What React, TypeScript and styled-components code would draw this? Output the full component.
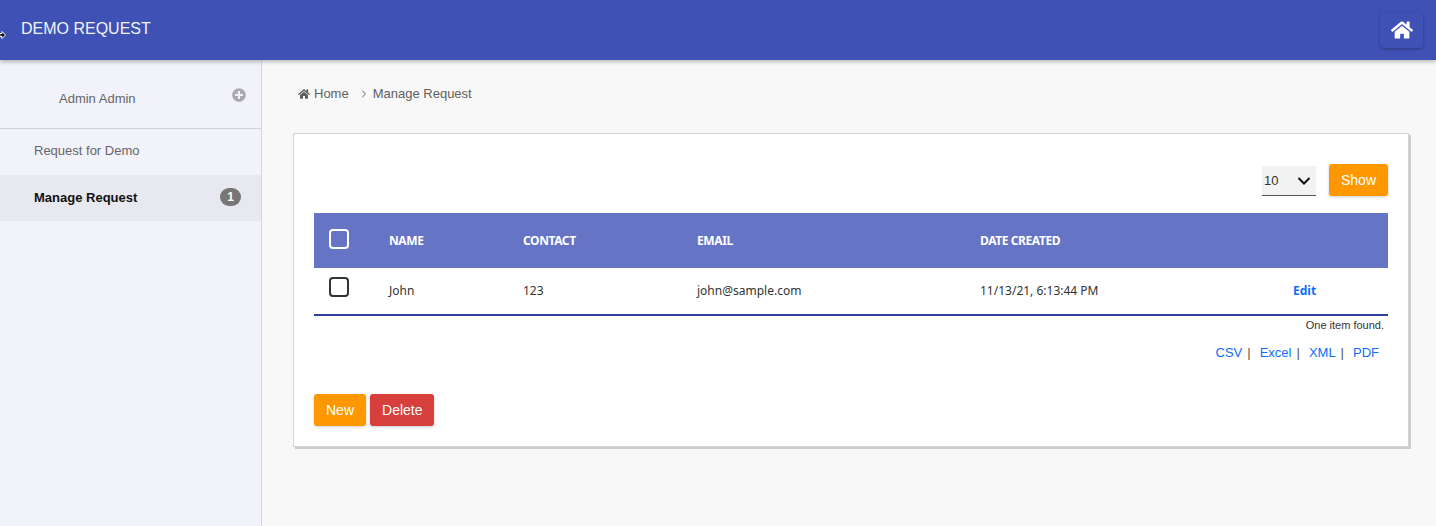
import React from 'react';
import styled, { createGlobalStyle } from 'styled-components';
import { FaHome, FaPlusCircle } from 'react-icons/fa';
import { FiChevronRight } from 'react-icons/fi';

const GlobalStyle = createGlobalStyle`
  html, body {
    margin: 0;
    padding: 0;
    height: 100%;
  }
  body {
    font-family: "Liberation Sans", Arial, sans-serif;
    background: #f8f8f8;
    overflow: hidden;
  }
`;

const columns = [
  { label: 'NAME', width: 134 },
  { label: 'CONTACT', width: 174 },
  { label: 'EMAIL', width: 283 },
  { label: 'DATE CREATED', width: 313 },
];

const App = () => {
  return (
    <Page>
      <GlobalStyle />
      <Header>
        <Brand>DEMO REQUEST</Brand>
        <HomeButton aria-label="Home">
          <FaHome size={22} />
        </HomeButton>
        <Cursor width="8" height="10" viewBox="0 0 8 10">
          <path d="M3 1.5 L6.5 5 L3 8.5 V6.5 H0.8 V3.5 H3 Z" fill="#111" stroke="#fff" strokeWidth="1" />
        </Cursor>
      </Header>
      <Body>
        <Sidebar>
          <UserRow>
            <UserName>Admin Admin</UserName>
            <UserToggle>
              <FaPlusCircle size={14} />
            </UserToggle>
          </UserRow>
          <NavItem>Request for Demo</NavItem>
          <NavItem $active>
            Manage Request
            <Badge>1</Badge>
          </NavItem>
        </Sidebar>
        <Main>
          <Breadcrumb>
            <FaHome size={12} />
            <Crumb>Home</Crumb>
            <CrumbArrow size={12} />
            <Crumb>Manage Request</Crumb>
          </Breadcrumb>
          <Card>
            <PageSizeBar>
              <PageSize>
                <span>10</span>
                <Chevron width="14" height="8" viewBox="0 0 14 8">
                  <path d="M1.5 1 L7 6.5 L12.5 1" fill="none" stroke="#111" strokeWidth="2" />
                </Chevron>
              </PageSize>
              <ActionButton $color="#ff9800">Show</ActionButton>
            </PageSizeBar>
            <Table>
              <colgroup>
                <Col $width={75} />
                {columns.map((c) => (
                  <Col key={c.label} $width={c.width} />
                ))}
                <col />
              </colgroup>
              <thead>
                <tr>
                  <HeadCell>
                    <Check $light />
                  </HeadCell>
                  {columns.map((c) => (
                    <HeadCell key={c.label}>{c.label}</HeadCell>
                  ))}
                  <HeadCell />
                </tr>
              </thead>
              <tbody>
                <tr>
                  <Cell>
                    <Check />
                  </Cell>
                  <Cell>John</Cell>
                  <Cell>123</Cell>
                  <Cell>john@sample.com</Cell>
                  <Cell>11/13/21, 6:13:44 PM</Cell>
                  <Cell>
                    <EditLink href="#edit">Edit</EditLink>
                  </Cell>
                </tr>
              </tbody>
            </Table>
            <ItemCount>One item found.</ItemCount>
            <Exports>
              <ExportLink href="#csv">CSV</ExportLink>
              <Pipe>|</Pipe>
              <ExportLink href="#excel">Excel</ExportLink>
              <Pipe>|</Pipe>
              <ExportLink href="#xml">XML</ExportLink>
              <Pipe>|</Pipe>
              <ExportLink href="#pdf">PDF</ExportLink>
            </Exports>
            <Actions>
              <ActionButton $color="#ff9800">New</ActionButton>
              <ActionButton $color="#d63f3b">Delete</ActionButton>
            </Actions>
          </Card>
        </Main>
      </Body>
    </Page>
  );
};

const Page = styled.div`
  display: flex;
  flex-direction: column;
  height: 526px;
`;

const Header = styled.header`
  position: relative;
  z-index: 2;
  flex: 0 0 60px;
  display: flex;
  align-items: center;
  justify-content: space-between;
  padding: 0 13px 3px 21px;
  box-sizing: border-box;
  background: #3f51b5;
  box-shadow: 0 2px 4px rgba(0, 0, 0, 0.25);
`;

const Brand = styled.div`
  color: #f2f3fb;
  font-size: 16px;
`;

const HomeButton = styled.button`
  width: 43px;
  height: 36px;
  padding: 0;
  margin-top: 3px;
  display: flex;
  align-items: center;
  justify-content: center;
  color: #fff;
  background: #3f51b5;
  border: none;
  border-radius: 4px;
  box-shadow: 0 1px 3px rgba(0, 0, 0, 0.3);
`;

const Cursor = styled.svg`
  position: absolute;
  left: -1px;
  top: 30px;
`;

const Body = styled.div`
  flex: 1;
  display: flex;
  min-height: 0;
`;

const Sidebar = styled.aside`
  flex: 0 0 261px;
  background: #f1f2fa;
  border-right: 1px solid #d6d6d9;
`;

const UserRow = styled.div`
  position: relative;
  height: 69px;
  padding: 30px 0 0 59px;
  box-sizing: border-box;
  border-bottom: 1px solid #d2d2d6;
`;

const UserName = styled.div`
  font-size: 13px;
  line-height: 17px;
  color: #666;
`;

const UserToggle = styled.span`
  position: absolute;
  top: 28px;
  right: 15px;
  color: #a9a9ad;
`;

const NavItem = styled.div<{ $active?: boolean }>`
  display: flex;
  align-items: center;
  justify-content: space-between;
  height: 46px;
  box-sizing: border-box;
  padding: 0 20px ${(p) => (p.$active ? 2 : 4)}px 34px;
  font-size: 13px;
  font-weight: ${(p) => (p.$active ? 700 : 400)};
  color: ${(p) => (p.$active ? '#111' : '#666')};
  background: ${(p) => (p.$active ? '#e7e8f0' : 'transparent')};
`;

const Badge = styled.span`
  width: 21px;
  height: 18px;
  border-radius: 9px;
  display: flex;
  align-items: center;
  justify-content: center;
  font-size: 12px;
  color: #fff;
  background: #777;
`;

const Main = styled.main`
  flex: 1;
  padding: 0 27px 0 31px;
  min-width: 0;
`;

const Breadcrumb = styled.nav`
  display: flex;
  align-items: center;
  height: 17px;
  margin: 25px 0 31px 5px;
  gap: 4px;
  font-size: 13px;
  color: #5f5f5f;
`;

const Crumb = styled.span`
  margin-right: 5px;
`;

const CrumbArrow = styled(FiChevronRight)`
  margin-right: -1px;
`;

const Card = styled.section`
  height: 314px;
  box-sizing: border-box;
  padding: 30px 20px 0 20px;
  background: #fff;
  border: 1px solid #d4d4d4;
  box-shadow: 2px 2px 0 #cccccc;
`;

const PageSizeBar = styled.div`
  display: flex;
  justify-content: flex-end;
  align-items: center;
  gap: 13px;
  height: 32px;
  margin-bottom: 17px;
`;

const PageSize = styled.div`
  display: flex;
  align-items: center;
  justify-content: space-between;
  width: 54px;
  height: 30px;
  margin-top: 2px;
  padding: 0 5px 0 2px;
  box-sizing: border-box;
  font-size: 13px;
  color: #333;
  background: #f2f2f2;
  border-bottom: 1px solid #555;
`;

const Chevron = styled.svg`
  display: block;
`;

const ActionButton = styled.button<{ $color: string }>`
  height: 32px;
  padding: 0 12px;
  font-family: "Liberation Sans", Arial, sans-serif;
  font-size: 14px;
  color: #fff;
  background: ${(p) => p.$color};
  border: none;
  border-radius: 3px;
  box-shadow: 0 1px 3px rgba(0, 0, 0, 0.2);
`;

const Table = styled.table`
  width: 100%;
  table-layout: fixed;
  border-collapse: collapse;
  font-family: "Noto Sans", Lato, sans-serif;
  font-size: 12px;
`;

const Col = styled.col<{ $width: number }>`
  width: ${(p) => p.$width}px;
`;

const HeadCell = styled.th`
  height: 55px;
  padding: 0;
  box-sizing: border-box;
  text-align: left;
  font-weight: 700;
  letter-spacing: -0.4px;
  color: #fff;
  background: #6574c4;

  &:first-child {
    padding-left: 15px;
  }
`;

const Cell = styled.td`
  height: 47px;
  padding: 0 0 2px;
  box-sizing: border-box;
  color: #333;
  border-bottom: 2px solid #303f9f;

  &:first-child {
    padding-left: 15px;
  }
`;

const Check = styled.span<{ $light?: boolean }>`
  display: block;
  width: 16px;
  height: 16px;
  margin-top: ${(p) => (p.$light ? -4 : -7)}px;
  border: 2px solid ${(p) => (p.$light ? '#fff' : '#333')};
  border-radius: 4px;
`;

const EditLink = styled.a`
  color: #0d6efd;
  font-weight: 700;
  text-decoration: none;
`;

const ItemCount = styled.div`
  margin-top: 2px;
  padding-right: 4px;
  text-align: right;
  font-size: 11px;
  line-height: 14px;
  color: #333;
`;

const Exports = styled.div`
  display: flex;
  justify-content: flex-end;
  margin-top: 13px;
  padding-right: 9px;
  font-size: 13px;
  line-height: 16px;
`;

const ExportLink = styled.a`
  color: #0d6efd;
  text-decoration: none;
`;

const Pipe = styled.span`
  margin: 0 9px 0 5px;
  color: #555;
`;

const Actions = styled.div`
  display: flex;
  gap: 4px;
  margin-top: 33px;
`;

export default App;
